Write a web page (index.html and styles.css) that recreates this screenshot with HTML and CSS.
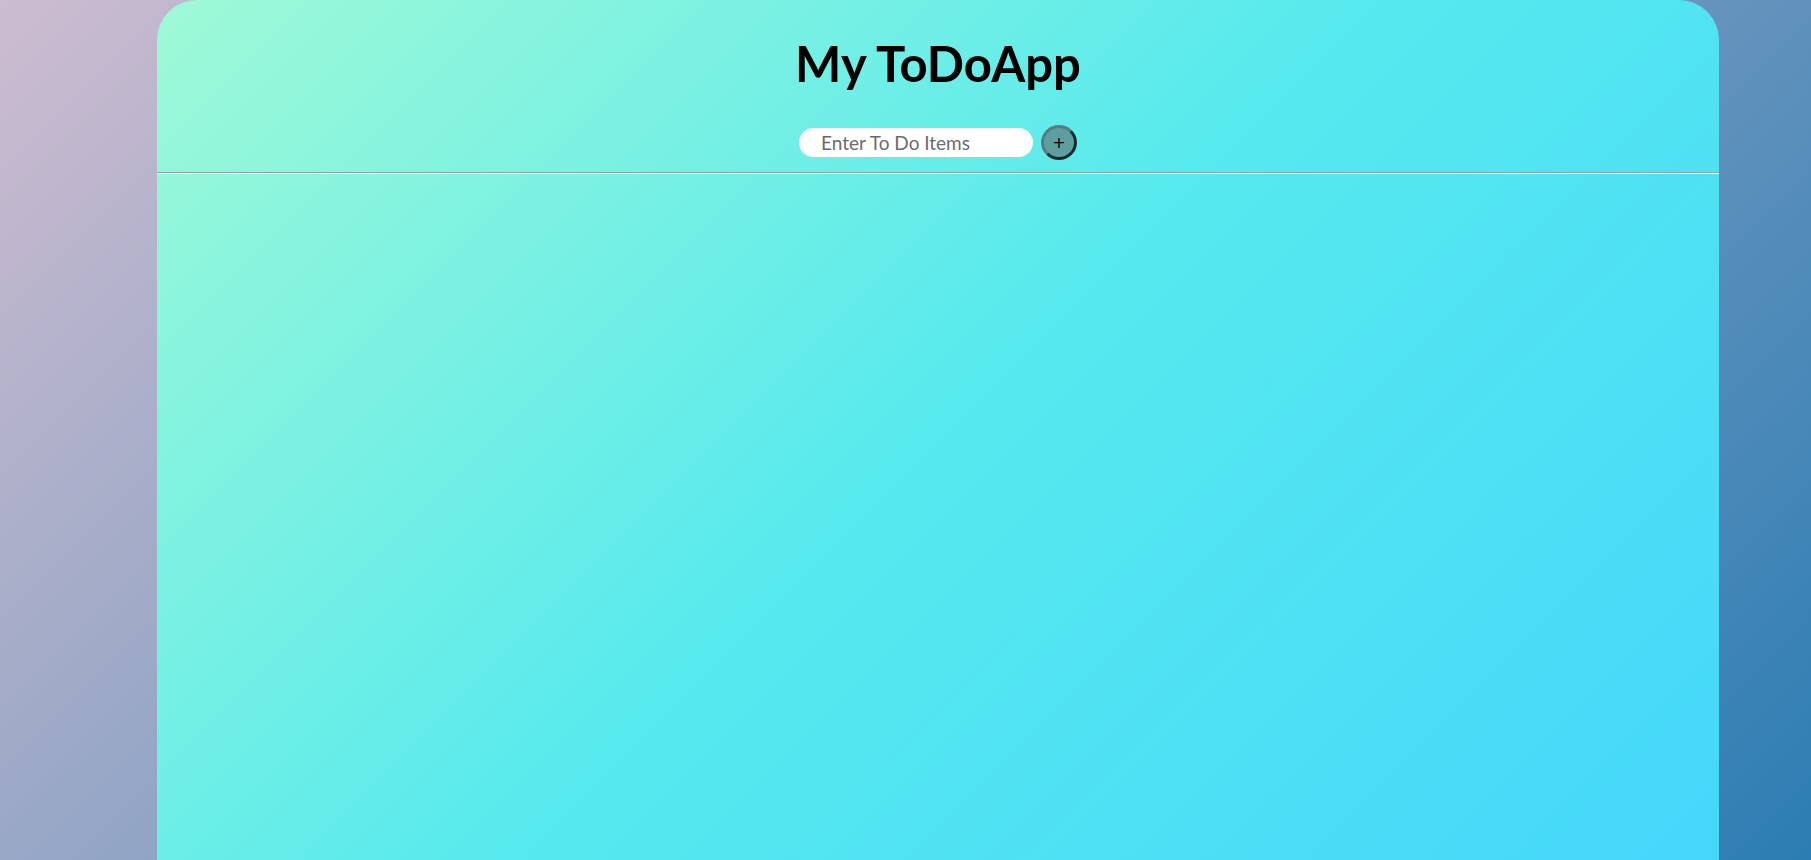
FILE: index.html
```html
<!DOCTYPE html>
<html lang="en">
<head>
<meta charset="utf-8">
<title>My ToDoApp</title>
<link rel="stylesheet" href="styles.css">
</head>
<body>
  <main class="card">
    <header class="header">
      <h1 class="title">My ToDoApp</h1>
      <form class="add-row">
        <input class="todo-input" type="text" placeholder="Enter To Do Items">
        <button class="add-btn" type="button">+</button>
      </form>
    </header>
    <hr class="divider">
    <ul class="todo-list"></ul>
  </main>
</body>
</html>
```

FILE: styles.css
```css
html, body {
  margin: 0;
  padding: 0;
  height: 100%;
}

body {
  background: linear-gradient(135deg, #cdbcd0 0%, #2c7db3 100%);
  font-family: Lato, "Open Sans", sans-serif;
  overflow: hidden;
}

.card {
  margin-left: 157px;
  width: 1562px;
  min-height: 100vh;
  border-radius: 40px 40px 0 0;
  background: linear-gradient(135deg, #9ff9d6 0%, #56e9ee 50%, #45d6fb 100%);
}

.header {
  display: flex;
  flex-direction: column;
  align-items: center;
  padding-top: 34px;
}

.title {
  margin: 0;
  font-size: 49px;
  line-height: 58px;
  font-weight: 700;
  color: #000;
}

.add-row {
  display: flex;
  align-items: center;
  gap: 8px;
  margin-top: 33px;
  margin-bottom: 4px;
}

.todo-input {
  box-sizing: border-box;
  width: 234px;
  height: 29px;
  border: none;
  border-radius: 15px;
  background: #fff;
  padding: 0 10px 0 22px;
  font-family: Lato, "Open Sans", sans-serif;
  font-size: 19px;
  color: #333;
  outline: none;
}

.todo-input::placeholder {
  color: #6b6b6b;
}

.add-btn {
  box-sizing: border-box;
  width: 36px;
  height: 35px;
  border-radius: 50%;
  border: 3px solid;
  border-color: #557c7e #1b2a2a #1b2a2a #557c7e;
  background: #5f9ea0;
  color: #000;
  font-size: 16px;
  font-family: "DejaVu Sans", sans-serif;
  line-height: 1;
  padding: 0;
  display: flex;
  align-items: center;
  justify-content: center;
}

.divider {
  margin: 8px 0 0;
  border: none;
  border-top: 1px solid #8ea2a2;
  border-bottom: 1px solid #effdfd;
}

.todo-list {
  margin: 0;
  padding: 0;
  list-style: none;
}
```
